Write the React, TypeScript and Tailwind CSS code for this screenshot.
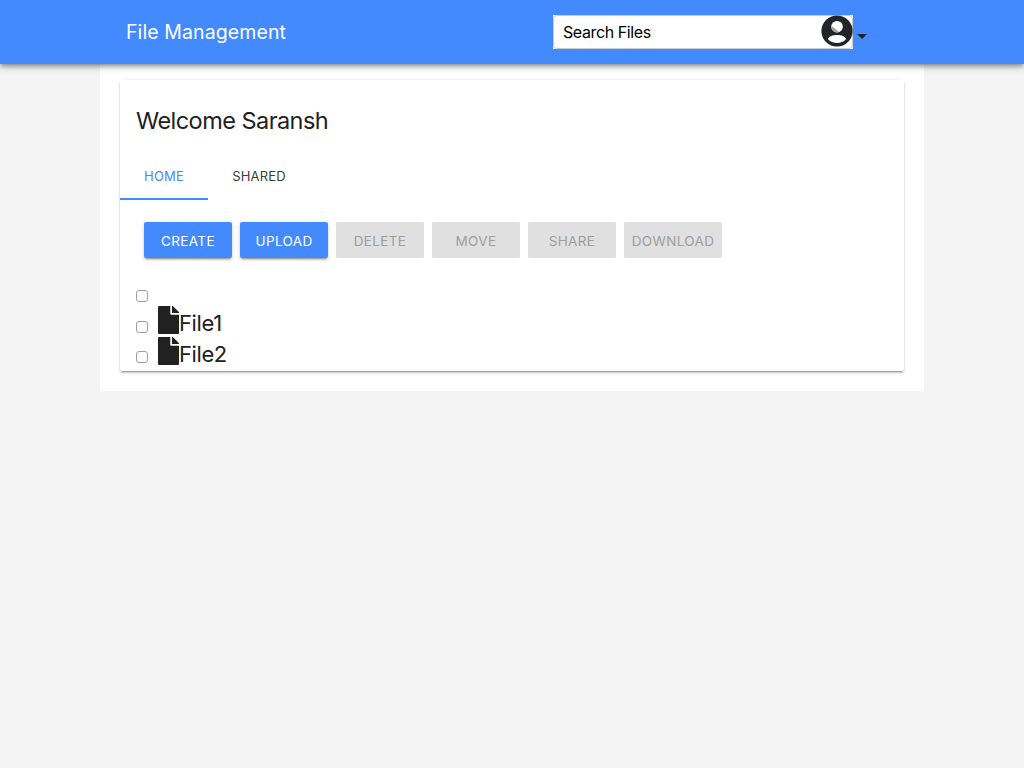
import { FaFile } from "react-icons/fa";

const actions = [
  { label: "CREATE", on: true, w: "w-[88px]" },
  { label: "UPLOAD", on: true, w: "w-[88px]" },
  { label: "DELETE", on: false, w: "w-[88px]" },
  { label: "MOVE", on: false, w: "w-[88px]" },
  { label: "SHARE", on: false, w: "w-[88px]" },
  { label: "DOWNLOAD", on: false, w: "w-[98px]" },
];

const files = [
  { name: "File1", gap: "mt-[15px]" },
  { name: "File2", gap: "mt-[14px]" },
];

function Box() {
  return <span className="block h-3 w-3 shrink-0 rounded-[3px] border border-[#a0a0a0] bg-white" />;
}

function Avatar() {
  return (
    <svg viewBox="0 0 32 32" className="block h-8 w-8">
      <circle cx="16" cy="16" r="15.6" fill="#212529" />
      <circle cx="16" cy="11.7" r="5.8" fill="#fff" />
      <path d="M10.4 11.5 L12.2 12.2 L17.6 16.6 L17.2 17.3 C14 18.2 10.4 15.6 10.4 11.5Z" fill="#a3a3a3" />
      <path d="M7 24.3 C7 21.4 12 20 16 20 S25 21.4 25 24.3 C22.5 27 19.5 28 16 28 S9.5 27 7 24.3Z" fill="#fff" />
    </svg>
  );
}

export default function App() {
  return (
    <div className="min-h-screen bg-[#f4f4f4] font-[Inter,sans-serif] text-[#212121]">
      <header className="relative flex h-16 items-center bg-[#448aff] pr-[157px] pl-[126px] shadow-[0_2px_4px_-1px_rgba(0,0,0,0.3),0_4px_5px_0_rgba(0,0,0,0.16),0_1px_10px_0_rgba(0,0,0,0.14)]">
        <h1 className="text-[19.5px] leading-7 tracking-[0.1px] text-white">File Management</h1>
        <div className="ml-auto flex h-[34px] w-[300px] items-center bg-white">
          <div className="flex h-full w-full items-center justify-between rounded-[4px] border border-[#ccc] pl-[9px] text-black">
            <span className="text-[16px] tracking-[-0.4px]">Search Files</span>
            <span className="-mr-px mb-[2px]">
              <Avatar />
            </span>
          </div>
        </div>
        <svg viewBox="0 0 10 5" className="mt-2 ml-1 h-[5px] w-[10px]">
          <path d="M0 0H10L5 5Z" fill="#212529" />
        </svg>
      </header>
      <main className="mx-auto h-[327px] w-[824px] bg-white px-5 pt-4">
        <section className="h-[291px] rounded-[2px] bg-white shadow-[0_2px_2px_0_rgba(0,0,0,0.14),0_1px_5px_0_rgba(0,0,0,0.12),0_3px_1px_-2px_rgba(0,0,0,0.2)]">
          <h2 className="px-4 pt-[25px] text-[23.5px] leading-8 tracking-[-0.54px]">Welcome Saransh</h2>
          <nav className="mt-[15px] flex h-12 text-[13px] tracking-[0.2px]">
            <div className="flex w-[88px] items-center justify-center border-b-2 border-[#448aff] pt-1 text-[#448aff]">HOME</div>
            <div className="flex w-[102px] items-center justify-center border-b-2 border-transparent pt-1 text-[#3d3d3d]">SHARED</div>
          </nav>
          <div className="mt-[22px] flex gap-2 pl-6 text-[13.5px] tracking-[0.35px]">
            {actions.map((a) => (
              <button
                key={a.label}
                className={`flex h-9 items-center justify-center rounded-[2px] pt-[2px] ${a.w} ${
                  a.on
                    ? "bg-[#448aff] text-white shadow-[0_2px_2px_0_rgba(0,0,0,0.14),0_1px_5px_0_rgba(0,0,0,0.12),0_3px_1px_-2px_rgba(0,0,0,0.2)]"
                    : "bg-[#e0e0e0] text-[#9e9e9e]"
                }`}
              >
                {a.label}
              </button>
            ))}
          </div>
          <div className="mt-8 pl-4">
            <Box />
            {files.map((f) => (
              <div key={f.name} className="flex h-[31px] items-start pt-1">
                <span className={f.gap}>
                  <Box />
                </span>
                <FaFile className="ml-[10px] h-7 w-[21px]" />
                <span className="mt-[2px] text-[22px] leading-[30px] tracking-[-0.4px]">{f.name}</span>
              </div>
            ))}
          </div>
        </section>
      </main>
    </div>
  );
}
